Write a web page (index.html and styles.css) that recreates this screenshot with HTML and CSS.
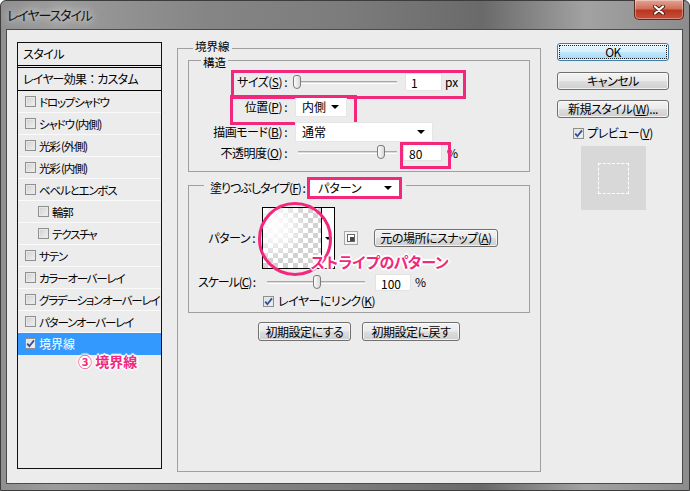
FILE: index.html
```html
<!DOCTYPE html>
<html lang="ja">
<head>
    <meta charset="UTF-8">
    <title>レイヤースタイル</title>
    <link rel="stylesheet" href="styles.css">
</head>
<body>
<div class="window">
    <div class="titlebar">
        <span class="title">レイヤースタイル</span>
        <span class="close">
            <svg width="12" height="10" viewBox="0 0 12 10">
                <path d="M2 1.5 L10 8.5 M10 1.5 L2 8.5" stroke="#4a1d12" stroke-width="4" stroke-linecap="round"/>
                <path d="M2 1.5 L10 8.5 M10 1.5 L2 8.5" stroke="#fff" stroke-width="2.2" stroke-linecap="round"/>
            </svg>
        </span>
    </div>

    <div class="client">
        <!-- effects list -->
        <div class="style-list">
            <div class="list-head">スタイル</div>
            <div class="list-sub">レイヤー効果<span class="fw">：</span>カスタム</div>
            <div class="item"><span class="cb"></span>ドロップシャドウ</div>
            <div class="item"><span class="cb"></span>シャドウ (内側)</div>
            <div class="item"><span class="cb"></span>光彩 (外側)</div>
            <div class="item"><span class="cb"></span>光彩 (内側)</div>
            <div class="item"><span class="cb"></span>ベベルとエンボス</div>
            <div class="item sub"><span class="cb"></span>輪郭</div>
            <div class="item sub"><span class="cb"></span>テクスチャ</div>
            <div class="item"><span class="cb"></span>サテン</div>
            <div class="item"><span class="cb"></span>カラーオーバーレイ</div>
            <div class="item"><span class="cb"></span>グラデーションオーバーレイ</div>
            <div class="item"><span class="cb"></span>パターンオーバーレイ</div>
            <div class="item selected">
                <span class="cb on"><svg width="9" height="9" viewBox="0 0 9 9"><path d="M1.2 4.6 L3.4 7.2 L8 1.4" fill="none" stroke="#2c4f9e" stroke-width="1.8"/></svg></span>境界線
            </div>
            <div class="note note-list">③ 境界線</div>
        </div>

        <!-- stroke settings -->
        <div class="group stroke-group">
            <div class="legend legend-stroke">境界線</div>

            <div class="group structure">
                <div class="legend legend-structure">構造</div>

                <div class="row row-size mark">
                    <span class="label">サイズ(<u>S</u>) :</span>
                    <span class="slider size-slider"><span class="thumb"></span></span>
                    <span class="field size-field">1</span>
                    <span class="unit">px</span>
                </div>
                <div class="row row-pos mark">
                    <span class="label">位置(<u>P</u>) :</span>
                    <span class="select pos-select">内側</span>
                </div>
                <div class="row row-blend">
                    <span class="label">描画モード(<u>B</u>) :</span>
                    <span class="select blend-select">通常</span>
                </div>
                <div class="row row-opacity mark">
                    <span class="label">不透明度(<u>O</u>) :</span>
                    <span class="slider opacity-slider"><span class="thumb"></span></span>
                    <span class="field opacity-field">80</span>
                    <span class="unit">%</span>
                </div>
            </div>

            <div class="group fill">
                <div class="legend legend-fill">
                    <span class="fill-label">塗りつぶしタイプ(<u>F</u>) :</span>
                    <span class="select fill-select">パターン</span>
                </div>

                <div class="row row-pattern">
                    <span class="label pattern-label">パターン :</span>
                    <span class="swatch"><span class="swatch-img"></span><span class="swatch-arrow"></span></span>
                    <span class="mini-btn">
                        <svg width="8" height="8" viewBox="0 0 8 8"><rect x="0.5" y="0.5" width="7" height="7" fill="#fff" stroke="#666"/><rect x="3" y="3" width="4" height="4" fill="#444"/></svg>
                    </span>
                    <span class="btn snap-btn">元の場所にスナップ(<u>A</u>)</span>
                    <span class="circle"></span>
                    <span class="note note-pattern">ストライプのパターン</span>
                </div>
                <div class="row row-scale">
                    <span class="label scale-label">スケール(<u>C</u>) :</span>
                    <span class="slider scale-slider"><span class="thumb"></span></span>
                    <span class="field scale-field">100</span>
                    <span class="unit">%</span>
                </div>
                <div class="row row-link">
                    <span class="cb on"><svg width="9" height="9" viewBox="0 0 9 9"><path d="M1.2 4.6 L3.4 7.2 L8 1.4" fill="none" stroke="#2c4f9e" stroke-width="1.8"/></svg></span>
                    <span>レイヤーにリンク(<u>K</u>)</span>
                </div>
            </div>

            <div class="defaults">
                <span class="btn default-btn">初期設定にする</span>
                <span class="btn reset-btn">初期設定に戻す</span>
            </div>
        </div>

        <!-- dialog buttons -->
        <div class="side">
            <span class="btn side-btn ok"><span class="focus">OK</span></span>
            <span class="btn side-btn">キャンセル</span>
            <span class="btn side-btn">新規スタイル(<u>W</u>)...</span>
            <div class="preview-check">
                <span class="cb on"><svg width="9" height="9" viewBox="0 0 9 9"><path d="M1.2 4.6 L3.4 7.2 L8 1.4" fill="none" stroke="#2c4f9e" stroke-width="1.8"/></svg></span>
                <span>プレビュー(<u>V</u>)</span>
            </div>
            <div class="preview"><span class="preview-inner"></span></div>
        </div>
    </div>
</div>
</body>
</html>
```

FILE: styles.css
```css
* {
    margin: 0;
    padding: 0;
    box-sizing: border-box;
}

body {
    width: 690px;
    height: 491px;
    overflow: hidden;
    font-family: "Noto Sans CJK JP", "Noto Sans", sans-serif;
    font-size: 12px;
    line-height: 14px;
    letter-spacing: -0.5px;
    color: #000;
    font-feature-settings: "palt";
    background: #fff;
}

u {
    text-decoration: underline;
    text-underline-offset: 1px;
}

/* window frame */
.window {
    width: 690px;
    height: 491px;
    padding: 0 6px 6px 5px;
    display: flex;
    flex-direction: column;
    border: 1px solid #3c3c3c;
    border-radius: 6px 6px 0 0;
    background: linear-gradient(to right, #8f8f8f 0%, #9c9c9c 8%, #858585 30%, #7c7c7c 50%, #6a6a6a 70%, #a2a2a2 85%, #8c8c8c 100%);
}

.titlebar {
    height: 28px;
    display: flex;
    justify-content: space-between;
    align-items: flex-start;
}

.title {
    line-height: 27px;
    font-size: 13px;
    letter-spacing: -1.1px;
    padding: 0 4px 0 1px;
    color: #111;
    text-shadow: 0 0 6px #d8d8d8, 0 0 10px #cfcfcf, 0 0 14px #c8c8c8;
}

.close {
    width: 50px;
    height: 20px;
    margin: -1px -1px 0 0;
    display: flex;
    align-items: center;
    justify-content: center;
    border: 1px solid #5b2a20;
    border-top: none;
    border-radius: 0 0 5px 5px;
    background: linear-gradient(#e3a493 0%, #d0705a 45%, #b9361f 55%, #c9503a 100%);
    box-shadow: inset 0 0 0 1px rgba(255, 255, 255, 0.35);
}

.client {
    flex: 1;
    display: flex;
    align-items: flex-start;
    background: #ececec;
    border: 1px solid #4a4a4a;
}

/* checkbox */
.cb {
    width: 11px;
    height: 11px;
    flex: none;
    display: flex;
    align-items: center;
    justify-content: center;
    border: 1px solid #8e8f8f;
    background: linear-gradient(135deg, #cfcfcf, #f2f2f2);
    box-shadow: inset 0 0 0 1px #e8e8e8;
}

.cb.on {
    background: linear-gradient(135deg, #dcdcdc, #f6f6f6);
}

/* effects list */
.style-list {
    margin: 12px 0 0 10px;
    width: 145px;
    height: 427px;
    border: 1px solid #111;
    overflow: hidden;
}

.list-head {
    height: 25px;
    line-height: 22px;
    padding-left: 5px;
    border-bottom: 3px double #000;
}

.list-sub {
    height: 23px;
    line-height: 22px;
    padding-left: 5px;
    letter-spacing: -0.8px;
    border-bottom: 1px solid #000;
}

.fw {
    font-feature-settings: normal;
}

.item {
    height: 22px;
    display: flex;
    align-items: center;
    padding-left: 7px;
    font-size: 11.5px;
    letter-spacing: -1.2px;
    border-bottom: 1px solid #fafafa;
    white-space: nowrap;
}

.item .cb {
    margin-right: 3px;
}

.item.sub {
    padding-left: 20px;
}

.item.selected {
    background: #3399ff;
    color: #fff;
    font-size: 12px;
    letter-spacing: 0;
    border-bottom-color: #3399ff;
}

.note {
    font-weight: 700;
    color: #f2287c;
    white-space: nowrap;
    text-shadow: 1px 0 0 #fff, -1px 0 0 #fff, 0 1px 0 #fff, 0 -1px 0 #fff,
        2px 0 1px #fff, -2px 0 1px #fff, 0 2px 1px #fff, 0 -2px 1px #fff;
}

.note-list {
    font-size: 14px;
    line-height: 14px;
    letter-spacing: 0;
    margin: -1px 0 0 60px;
}

/* groups */
.group {
    border: 1px solid #a0a0a0;
}

.legend {
    width: fit-content;
    height: 12px;
    line-height: 12px;
    padding: 0 2px;
    font-size: 11.5px;
    letter-spacing: 0;
    background: #ececec;
}

.stroke-group {
    margin: 18px 0 0 15px;
    width: 364px;
    height: 424px;
    padding: 0 10px;
}

.legend-stroke {
    margin: -9px 0 0 5px;
}

.structure {
    margin-top: 8px;
    padding-bottom: 10px;
}

.legend-structure {
    margin: -5px 0 2px 12px;
}

.row {
    position: relative;
    display: flex;
    align-items: center;
    white-space: nowrap;
}

.label {
    width: 102px;
    flex: none;
    text-align: right;
    padding-right: 4px;
}

.row-size { height: 24px; }
.row-pos { height: 25px; }
.row-blend { height: 25px; }
.row-opacity { height: 17px; }

/* pink highlight boxes */
.mark::before {
    content: "";
    position: absolute;
    border: 3px solid #f2287c;
}

.row-size::before {
    left: 42px;
    top: 0;
    width: 229px;
    height: 23px;
}

.row-pos::before {
    left: 41px;
    top: 1px;
    width: 121px;
    height: 24px;
}

.row-opacity::before {
    left: 211px;
    top: -2px;
    width: 45px;
    height: 21px;
}

/* slider */
.slider {
    position: relative;
    height: 3px;
    flex: none;
    border-top: 1px solid #a9a9a9;
    border-bottom: 1px solid #fff;
    background: #dadada;
}

.thumb {
    position: absolute;
    top: -7px;
    width: 8px;
    height: 14px;
    border: 1px solid #7b7b7b;
    border-radius: 3px 3px 4px 4px;
    background: linear-gradient(to right, #fdfdfd, #d8d8d8);
}

.size-slider {
    width: 104px;
    margin-left: 2px;
}

.size-slider .thumb { left: 0; }

.opacity-slider {
    width: 99px;
    margin-left: 7px;
}

.opacity-slider .thumb { left: 79px; }

.scale-slider {
    width: 98px;
    margin-left: 8px;
}

.scale-slider .thumb { left: 46px; }

.field {
    height: 18px;
    line-height: 17px;
    flex: none;
    padding-left: 5px;
    letter-spacing: 0;
    background: #fff;
    border: 1px solid #e2e2e2;
}

.size-field {
    width: 37px;
    margin-left: 8px;
}

.opacity-field {
    width: 39px;
    height: 17px;
    margin-left: 6px;
}

.scale-field {
    width: 36px;
    height: 17px;
    margin-left: 10px;
}

.unit {
    margin-left: 3px;
    letter-spacing: 0;
}

.row-opacity .unit {
    margin-left: 5px;
}

/* dropdowns */
.select {
    height: 20px;
    flex: none;
    display: flex;
    align-items: center;
    justify-content: space-between;
    padding: 0 7px 0 6px;
    letter-spacing: 0;
    background: #fff;
    border: 1px solid #e6e6e6;
}

.select::after {
    content: "";
    border-left: 4px solid transparent;
    border-right: 4px solid transparent;
    border-top: 4px solid #000;
}

.pos-select {
    width: 52px;
    margin-left: 4px;
}

.blend-select {
    width: 138px;
    margin-left: 4px;
}

/* fill type group */
.fill {
    margin-top: 13px;
    padding-bottom: 3px;
}

.legend-fill {
    height: 22px;
    display: flex;
    align-items: center;
    margin: -9px 0 0 15px;
    padding: 0 4px 0 6px;
    font-size: 12px;
}

.fill-label {
    width: 97px;
    letter-spacing: -1px;
    white-space: nowrap;
}

.fill-select {
    width: 95px;
    height: 22px;
    border: 3px solid #f2287c;
    padding: 0 7px 0 8px;
}

.row-pattern {
    height: 62px;
    margin-top: 8px;
}

.pattern-label {
    width: 68px;
    padding-right: 2px;
}

.swatch {
    width: 73px;
    height: 62px;
    margin-left: 5px;
    flex: none;
    display: flex;
    border: 1px solid #000;
    background: #fff;
}

.swatch-img {
    width: 59px;
    border-right: 1px solid #000;
    background:
        radial-gradient(circle at 20% 30%, rgba(255, 255, 255, 0.95) 0, rgba(255, 255, 255, 0.7) 25%, rgba(255, 255, 255, 0) 55%),
        repeating-conic-gradient(#d2d2d2 0 25%, #fff 0 50%) 0 0 / 10px 10px;
}

.swatch-arrow {
    flex: 1;
    display: flex;
    align-items: center;
    justify-content: center;
}

.swatch-arrow::after {
    content: "";
    border-left: 3px solid transparent;
    border-right: 3px solid transparent;
    border-top: 3px solid #000;
}

.mini-btn {
    width: 14px;
    height: 14px;
    margin-left: 9px;
    flex: none;
    display: flex;
    align-items: center;
    justify-content: center;
    border: 1px solid #a8a8a8;
    background: #f4f4f4;
}

.btn {
    display: flex;
    align-items: center;
    justify-content: center;
    flex: none;
    border: 1px solid #707070;
    border-radius: 3px;
    white-space: nowrap;
    background: linear-gradient(#f2f2f2 0%, #ebebeb 48%, #dddddd 52%, #cfcfcf 100%);
    box-shadow: inset 0 0 0 1px rgba(255, 255, 255, 0.7);
}

.snap-btn {
    width: 124px;
    height: 18px;
    margin-left: 16px;
}

.circle {
    position: absolute;
    left: 69px;
    top: -5px;
    width: 74px;
    height: 74px;
    border: 3px solid #f2287c;
    border-radius: 50%;
}

.note-pattern {
    position: absolute;
    left: 121px;
    top: 46px;
    font-size: 15px;
    line-height: 18px;
    font-feature-settings: normal;
    letter-spacing: -1.1px;
}

.row-scale {
    height: 18px;
    margin-top: 4px;
}

.scale-label {
    width: 70px;
    letter-spacing: -1.1px;
}

.row-scale .unit {
    margin-left: 4px;
}

.row-link {
    height: 16px;
    margin-top: 2px;
    padding-left: 74px;
    gap: 4px;
}

.defaults {
    margin-top: 9px;
    display: flex;
    justify-content: center;
    gap: 11px;
}

.default-btn {
    width: 93px;
    height: 19px;
}

.reset-btn {
    width: 98px;
    height: 19px;
}

/* right column */
.side {
    margin: 13px 0 0 16px;
    width: 112px;
    display: flex;
    flex-direction: column;
    align-items: center;
}

.side-btn {
    width: 112px;
    height: 18px;
    margin-top: 10px;
}

.side-btn.ok {
    margin-top: 0;
    padding: 1px;
    border-color: #3c7fb1;
    background: linear-gradient(#eaf6fd 0%, #d9f0fc 48%, #bee6fd 52%, #a7d9f5 100%);
}

.side-btn.ok + .side-btn {
    margin-top: 11px;
}

.focus {
    width: 100%;
    height: 100%;
    display: flex;
    align-items: center;
    justify-content: center;
    border: 1px dotted #222;
}

.preview-check {
    margin-top: 8px;
    height: 14px;
    display: flex;
    align-items: center;
    gap: 3px;
}

.preview {
    margin-top: 6px;
    width: 65px;
    height: 64px;
    display: flex;
    align-items: center;
    justify-content: center;
    background: #d8d8d8;
}

.preview-inner {
    width: 31px;
    height: 31px;
    border: 1px dashed #fff;
}
```
